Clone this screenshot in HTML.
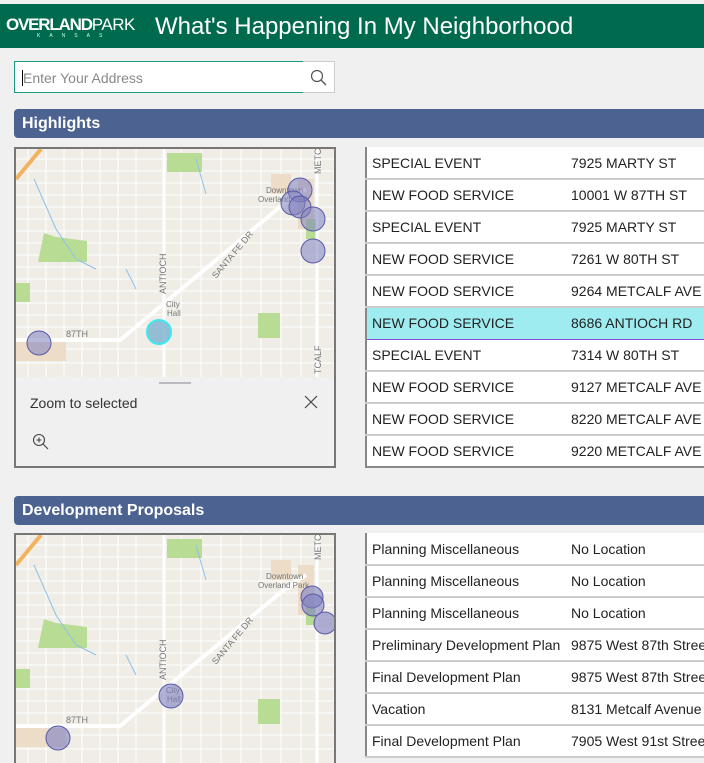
<!DOCTYPE html>
<html><head><style>
*{margin:0;padding:0;box-sizing:border-box}
body{width:704px;height:740px;overflow:hidden;background:#f0f0f0;font-family:"Liberation Sans",sans-serif;position:relative}
.hdr{position:absolute;left:0;top:4px;width:704px;height:44px;background:#006a4e;color:#fff}
.logo{position:absolute;left:6px;top:11px;font-size:17px;font-weight:bold;letter-spacing:-1.2px}
.logo span{font-weight:normal;letter-spacing:-0.5px}
.ks{position:absolute;left:37px;top:29px;font-size:5px;letter-spacing:9px;color:#cfe}
.title{position:absolute;left:155px;top:9px;font-size:24px}
.inp{position:absolute;left:14px;top:61px;width:290px;height:32px;border:1px solid #1a9a80;background:#fff;font-size:14px;color:#888;padding:8px 0 0 8px}
.inp:before{content:"";position:absolute;left:7px;top:8px;width:1px;height:16px;background:#000}
.btn{position:absolute;left:303px;top:61px;width:32px;height:32px;border:1px solid #ccc;border-left:none;background:#fff}
.bar{position:absolute;left:14px;width:690px;height:29px;background:#4c6290;border-radius:4px 0 0 4px;color:#fff;font-weight:bold;font-size:16px;padding:6px 0 0 8px}
.mapbox{position:absolute;left:14px;width:322px;border:2px solid #777;background:#f0f0f0;overflow:hidden}
table{position:absolute;left:365px;width:420px;table-layout:fixed;border-collapse:collapse;background:#fff;border-left:2px solid #888;font-size:14px;color:#222}
td{height:32px;border-bottom:2px solid #ccc;padding:0 0 0 5px;white-space:nowrap;overflow:hidden}
tr.sel td{background:#9eebf0;border-top:1px solid #8a4de0;border-bottom:1px solid #8a4de0}
</style></head><body>
<div class="hdr"><div class="logo">OVERLAND<span>PARK</span></div><div class="ks">KANSAS</div><div class="title">What's Happening In My Neighborhood</div></div>
<div class="inp">Enter Your Address</div>
<div class="btn"><svg width="32" height="32"><circle cx="14" cy="14" r="5.5" fill="none" stroke="#555" stroke-width="1.2"/><line x1="18" y1="18" x2="23" y2="23" stroke="#555" stroke-width="1.3"/></svg></div>

<div class="bar" style="top:109px">Highlights</div>
<div class="mapbox" style="top:147px;height:321px">
<svg width="318" height="228" style="display:block">
<rect width="318" height="228" fill="#efede6"/>
<g stroke="#fff" stroke-width="1" opacity=".95">
<path d="M0 10H318M0 22H318M0 34H318M0 46H318M0 58H318M0 70H318M0 82H318M0 94H318M0 106H318M0 118H318M0 130H318M0 142H318M0 154H318M0 166H318M0 178H318M0 200H318M0 214H318M12 0V228M30 0V228M48 0V228M66 0V228M84 0V228M102 0V228M120 0V228M165 0V228M185 0V228M205 0V228M225 0V228M245 0V228M265 0V228M285 0V228"/>
</g>
<g fill="#ecdcc8"><rect x="0" y="190" width="50" height="22"/><rect x="282" y="30" width="16" height="50"/><rect x="255" y="25" width="20" height="20"/></g>
<g fill="#b9dc95"><rect x="151" y="4" width="35" height="19"/><path d="M22 113L28 84L40 88L71 92L71 113Z"/><rect x="0" y="134" width="14" height="19"/><rect x="242" y="164" width="22" height="25"/><rect x="290" y="70" width="10" height="20"/></g>
<path d="M18 30L40 80L60 110L80 120M110 120L120 140M180 10L190 45" stroke="#8ec0ea" stroke-width="1" fill="none"/>
<path d="M0 30L25 0" stroke="#f2b35e" stroke-width="4"/>
<path d="M148 0V228M301 0V228" stroke="#fff" stroke-width="3"/>
<path d="M0 191H104L264 58L290 40" stroke="#fff" stroke-width="4" fill="none"/>
<g font-size="9" fill="#777" font-family="Liberation Sans"><text x="50" y="188">87TH</text><text transform="translate(150,145) rotate(-90)">ANTIOCH</text><text transform="translate(200,130) rotate(-50)">SANTA FE DR</text><text x="150" y="158" font-size="8">City</text><text x="151" y="167" font-size="8">Hall</text><text x="250" y="44" font-size="8">Downtown</text><text x="242" y="53" font-size="8">Overland Park</text><text transform="translate(305,25) rotate(-90)">METC</text><text transform="translate(305,225) rotate(-90)">TCALF</text></g>
<g fill="#7d7fc0" fill-opacity=".55" stroke="#5a5aa8" stroke-width="1"><circle cx="284" cy="41" r="12"/><circle cx="277" cy="54" r="12"/><circle cx="284" cy="58" r="11"/><circle cx="297" cy="70" r="12"/><circle cx="297" cy="102" r="12"/><circle cx="23" cy="194" r="12"/></g>
<circle cx="143" cy="183" r="12" fill="#7ab0d0" fill-opacity=".8" stroke="#3ee8f0" stroke-width="2"/>
</svg>
<div style="position:absolute;left:143px;top:233px;width:32px;height:2px;background:#bbb"></div>
<div style="position:absolute;left:14px;top:246px;font-size:14px;color:#333">Zoom to selected</div>
<svg style="position:absolute;left:288px;top:246px" width="14" height="14"><path d="M1 1L13 13M13 1L1 13" stroke="#444" stroke-width="1.2"/></svg>
<svg style="position:absolute;left:16px;top:284px" width="18" height="18"><circle cx="7" cy="7" r="5.5" fill="none" stroke="#444" stroke-width="1.1"/><path d="M11 11L16 16M4.5 7H9.5M7 4.5V9.5" stroke="#444" stroke-width="1.1"/></svg>
</div>
<table style="top:147px">
<colgroup><col style="width:200px"><col></colgroup>
<tr><td>SPECIAL EVENT</td><td>7925 MARTY ST</td></tr>
<tr><td>NEW FOOD SERVICE</td><td>10001 W 87TH ST</td></tr>
<tr><td>SPECIAL EVENT</td><td>7925 MARTY ST</td></tr>
<tr><td>NEW FOOD SERVICE</td><td>7261 W 80TH ST</td></tr>
<tr><td>NEW FOOD SERVICE</td><td>9264 METCALF AVE</td></tr>
<tr class="sel"><td>NEW FOOD SERVICE</td><td>8686 ANTIOCH RD</td></tr>
<tr><td>SPECIAL EVENT</td><td>7314 W 80TH ST</td></tr>
<tr><td>NEW FOOD SERVICE</td><td>9127 METCALF AVE</td></tr>
<tr><td>NEW FOOD SERVICE</td><td>8220 METCALF AVE</td></tr>
<tr><td style="border-bottom-color:#888">NEW FOOD SERVICE</td><td style="border-bottom-color:#888">9220 METCALF AVE</td></tr>
</table>

<div class="bar" style="top:496px">Development Proposals</div>
<div class="mapbox" style="top:533px;height:230px;border-bottom:none">
<svg width="318" height="228" style="display:block">
<rect width="318" height="228" fill="#efede6"/>
<g stroke="#fff" stroke-width="1" opacity=".95">
<path d="M0 10H318M0 22H318M0 34H318M0 46H318M0 58H318M0 70H318M0 82H318M0 94H318M0 106H318M0 118H318M0 130H318M0 142H318M0 154H318M0 166H318M0 178H318M0 200H318M0 214H318M12 0V228M30 0V228M48 0V228M66 0V228M84 0V228M102 0V228M120 0V228M165 0V228M185 0V228M205 0V228M225 0V228M245 0V228M265 0V228M285 0V228"/>
</g>
<g fill="#ecdcc8"><rect x="0" y="190" width="50" height="22"/><rect x="282" y="30" width="16" height="50"/><rect x="255" y="25" width="20" height="20"/></g>
<g fill="#b9dc95"><rect x="151" y="4" width="35" height="19"/><path d="M22 113L28 84L40 88L71 92L71 113Z"/><rect x="0" y="134" width="14" height="19"/><rect x="242" y="164" width="22" height="25"/><rect x="290" y="70" width="10" height="20"/></g>
<path d="M18 30L40 80L60 110L80 120M110 120L120 140M180 10L190 45" stroke="#8ec0ea" stroke-width="1" fill="none"/>
<path d="M0 30L25 0" stroke="#f2b35e" stroke-width="4"/>
<path d="M148 0V228M301 0V228" stroke="#fff" stroke-width="3"/>
<path d="M0 191H104L264 58L290 40" stroke="#fff" stroke-width="4" fill="none"/>
<g font-size="9" fill="#777" font-family="Liberation Sans"><text x="50" y="188">87TH</text><text transform="translate(150,145) rotate(-90)">ANTIOCH</text><text transform="translate(200,130) rotate(-50)">SANTA FE DR</text><text x="150" y="158" font-size="8">City</text><text x="151" y="167" font-size="8">Hall</text><text x="250" y="44" font-size="8">Downtown</text><text x="242" y="53" font-size="8">Overland Park</text><text transform="translate(305,25) rotate(-90)">METC</text></g>
<g fill="#7d7fc0" fill-opacity=".6" stroke="#5a5aa8" stroke-width="1"><circle cx="296" cy="62" r="11"/><circle cx="297" cy="70" r="11"/><circle cx="309" cy="88" r="11"/><circle cx="155" cy="161" r="12"/><circle cx="42" cy="203" r="12"/></g>
</svg>
</div>
<table style="top:533px">
<colgroup><col style="width:200px"><col></colgroup>
<tr><td>Planning Miscellaneous</td><td>No Location</td></tr>
<tr><td>Planning Miscellaneous</td><td>No Location</td></tr>
<tr><td>Planning Miscellaneous</td><td>No Location</td></tr>
<tr><td>Preliminary Development Plan</td><td>9875 West 87th Street</td></tr>
<tr><td>Final Development Plan</td><td>9875 West 87th Street</td></tr>
<tr><td>Vacation</td><td>8131 Metcalf Avenue</td></tr>
<tr><td>Final Development Plan</td><td>7905 West 91st Street</td></tr>
</table>
</body></html>
